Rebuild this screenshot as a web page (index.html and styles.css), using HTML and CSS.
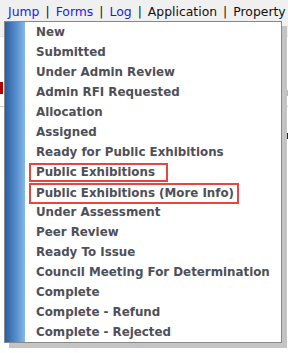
FILE: index.html
```html
<!DOCTYPE html>
<html>
<head>
<meta charset="utf-8">
<link rel="stylesheet" href="styles.css">
</head>
<body>
<div class="topbar">
  <nav class="links">
    <a class="lnk">Jump</a><span class="sep">|</span><a class="lnk">Forms</a><span class="sep">|</span><a class="lnk">Log</a><span class="sep">|</span><span class="plain">Application</span><span class="sep">|</span><span class="plain">Property</span>
  </nav>
</div>
<div class="page">
  <div class="row">
    <span class="redmark"></span>
    <span class="spacer"></span>
    <span class="graymark"></span>
  </div>
  <div class="rule"></div>
  <div class="row2"><span class="spacer"></span><span class="digit"></span></div>
</div>
<div class="menu">
  <div class="stripe"></div>
  <ul class="items">
    <li>New</li>
    <li>Submitted</li>
    <li>Under Admin Review</li>
    <li>Admin RFI Requested</li>
    <li>Allocation</li>
    <li>Assigned</li>
    <li>Ready for Public Exhibitions</li>
    <li><span class="mark mark-a">Public Exhibitions</span></li>
    <li><span class="mark mark-b">Public Exhibitions (More Info)</span></li>
    <li>Under Assessment</li>
    <li>Peer Review</li>
    <li>Ready To Issue</li>
    <li>Council Meeting For Determination</li>
    <li>Complete</li>
    <li>Complete - Refund</li>
    <li>Complete - Rejected</li>
  </ul>
</div>
</body>
</html>
```

FILE: styles.css
```css
html, body {
  margin: 0;
  padding: 0;
  background: #ffffff;
  width: 288px;
  height: 353px;
  overflow: hidden;
  position: relative;
}
.topbar {
  background: #f0f0f0;
  height: 37px;
  border-bottom: 1px solid #e2e2e2;
  box-sizing: border-box;
}
.links {
  display: flex;
  align-items: baseline;
  padding: 4px 0 0 8px;
  font-family: "DejaVu Sans", Verdana, sans-serif;
  font-size: 12.4px;
  white-space: nowrap;
}
.lnk { color: #1c1ce6; }
.plain { color: #111; }
.sep { color: #111; margin: 0 6px; }
.page {
  display: flex;
  flex-direction: column;
}
.row {
  display: flex;
  margin-top: 45px;
  height: 12px;
}
.redmark { width: 3px; background: #b30000; }
.spacer { flex: 1; }
.graymark { width: 6px; background: #b8b8b8; margin-top: 8px; height: 6px; }
.rule { height: 1px; background: #d0d0d0; margin-top: 12px; }
.row2 { display: flex; margin-top: 26px; }
.digit { width: 3px; height: 6px; background: #5a1010; }

.menu {
  position: absolute;
  left: 4px;
  top: 21px;
  width: 276px;
  height: 320px;
  background: #ffffff;
  border: 1px solid #888;
  display: flex;
  box-shadow: 5px 5px 0 0 #c4c4c4;
}
.stripe {
  width: 20px;
  background: linear-gradient(to right, #2a5f9f, #5a91cf 60%, #86b9e8);
}
.items {
  list-style: none;
  margin: 0;
  padding: 0 0 0 11px;
  font-family: "DejaVu Sans", Verdana, sans-serif;
  font-weight: bold;
  font-size: 11.85px;
  color: #4e4f58;
  display: flex;
  flex-direction: column;
}
.items li {
  height: 20px;
  line-height: 20px;
  white-space: nowrap;
}
.mark {
  display: inline-block;
  border: 2px solid #e5473f;
  padding: 0 3px 0 5px;
  margin-left: -7px;
}
.mark-a { line-height: 15px; padding-right: 11px; }
.mark-b { line-height: 17px; margin-top: 1px; }
```
